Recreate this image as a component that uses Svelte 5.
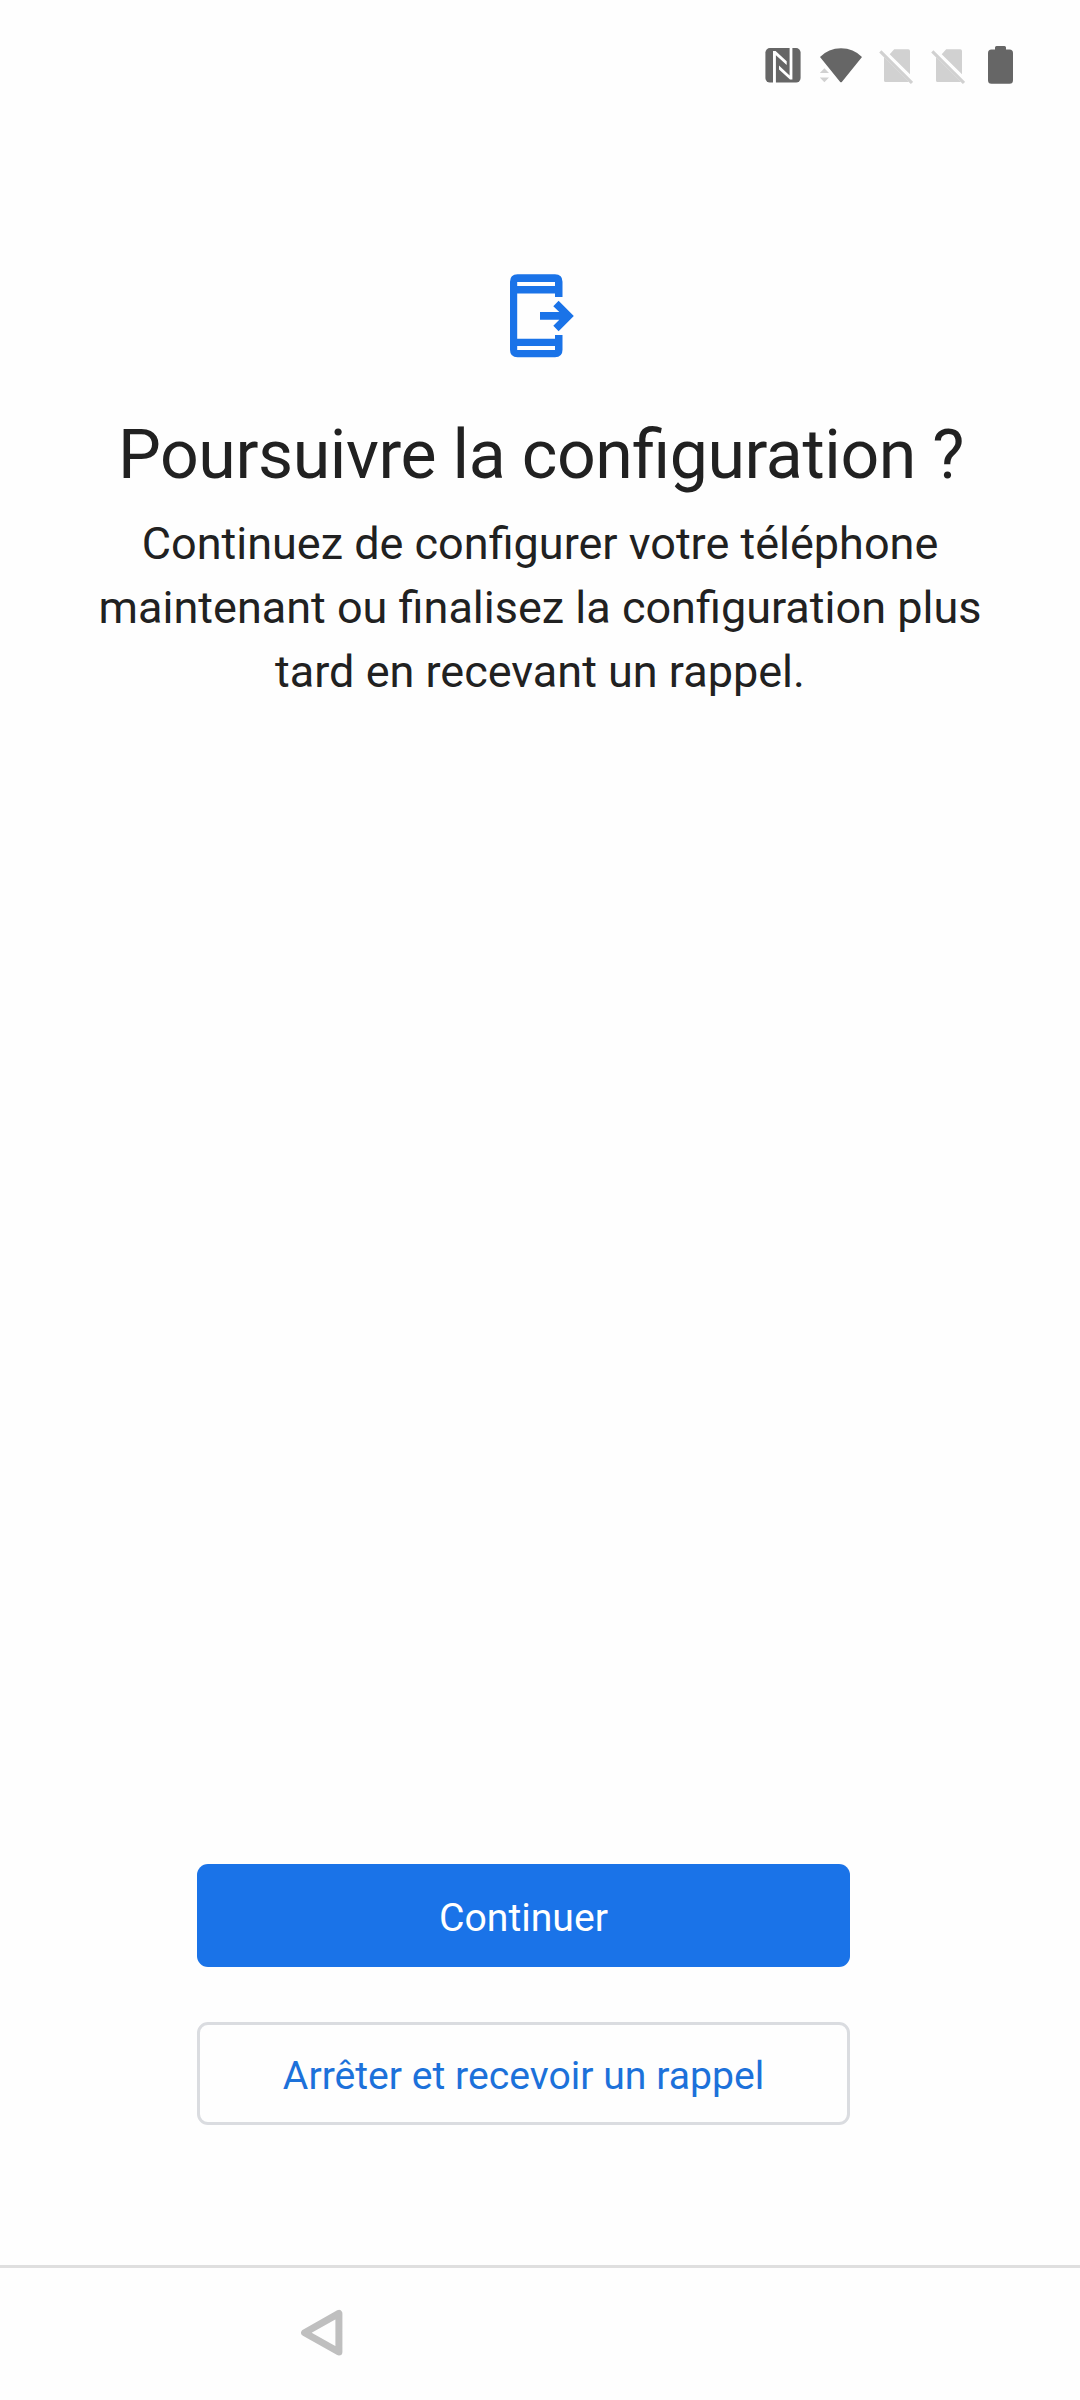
<script>
  const description = [
    'Continuez de configurer votre téléphone',
    'maintenant ou finalisez la configuration plus',
    'tard en recevant un rappel.'
  ];
</script>

<div class="screen">
  <header class="status">
    <svg class="nfc" width="36" height="36" viewBox="0 0 36 36">
      <rect x="0.4" y="0.1" width="35.2" height="34.5" rx="4.5" fill="#666" />
      <path d="M8 35V3H10.6L21.7 13.2V17L10.9 7.2V35ZM27.4 0V31.6H25L14 21.4V17.6L24.6 27.4V0Z" fill="#fff" />
    </svg>
    <svg class="wifi" width="44" height="36" viewBox="0 0 44 36">
      <path d="M1 9Q9.5 0.2 22 0.2T43 9L23 33.7Q22 35 21 33.7Z" fill="#666" />
      <path d="M5.4 20.2L10 25H0.8ZM0.8 29.5H10L5.4 34.3Z" fill="#d1d1d1" />
    </svg>
    {#each [0, 1] as slot (slot)}
      <svg class="sim" width="34" height="36" viewBox="0 0 34 36">
        <path d="M10.7 6.3L15.2 1.2H29.3Q31 1.2 31 2.9V26.2ZM5 9.2L30 34H6.5Q5 34 5 32.5Z" fill="#d1d1d1" />
        <path d="M1.3 3.3L33 34.9" stroke="#d1d1d1" stroke-width="3.2" />
      </svg>
    {/each}
    <svg class="battery" width="25" height="38" viewBox="0 0 25 38">
      <path d="M8.5 0H16.5Q18 0 18 1.5V3.6H21.5Q25 3.6 25 7.1V34.2Q25 37.7 21.5 37.7H3.5Q0 37.7 0 34.2V7.1Q0 3.6 3.5 3.6H7V1.5Q7 0 8.5 0Z" fill="#666" />
    </svg>
  </header>

  <main>
    <svg class="logo" width="64" height="84" viewBox="0 0 64 84">
      <path
        fill="#1a73e8"
        fill-rule="evenodd"
        d="M7.5 .3H45Q52.5 .3 52.5 7.8V23H45V19.4H7.2V64.7H45V61H52.5V75.8Q52.5 83.3 45 83.3H7.5Q0 83.3 0 75.8V7.8Q0 .3 7.5 .3ZM7.2 8V12H45V8ZM7.2 72V76H45V72Z"
      />
      <path d="M30 38H49.3L43.3 32.2L48.6 26.8L63.8 42L48.6 57.2L43.3 51.8L49.3 45.8H30Z" fill="#1a73e8" />
    </svg>
    <h1>Poursuivre la configuration ?</h1>
    <p>
      {#each description as line (line)}
        <span>{line}</span>
      {/each}
    </p>
  </main>

  <div class="actions">
    <button class="primary">Continuer</button>
    <button class="secondary">Arrêter et recevoir un rappel</button>
  </div>

  <nav>
    <svg class="back" width="44" height="48" viewBox="0 0 44 48">
      <path d="M38.9 4.4V43L4.6 23.7Z" fill="none" stroke="#bfbfbf" stroke-width="7" stroke-linejoin="round" />
    </svg>
  </nav>
</div>

<style>
  :global(body) {
    margin: 0;
    background: #fefefe;
  }
  .screen {
    box-sizing: border-box;
    width: 1080px;
    height: 2400px;
    display: flex;
    flex-direction: column;
    background: #fefefe;
    color: #212121;
    font-family: Roboto, sans-serif;
  }
  svg {
    display: block;
    flex: none;
  }
  .status {
    box-sizing: border-box;
    height: 130px;
    padding: 48px 67px 0 0;
    display: flex;
    justify-content: flex-end;
    align-items: flex-start;
  }
  .nfc {
    margin-right: 18px;
  }
  .wifi {
    margin-right: 16px;
  }
  .sim {
    margin-right: 18px;
  }
  .battery {
    margin: -2px 0 0 5px;
  }
  main {
    flex: 1;
    display: flex;
    flex-direction: column;
    align-items: center;
    padding-top: 144px;
  }
  .logo {
    margin-left: 4px;
  }
  h1 {
    margin: 57px 0 0 2px;
    font-size: 68px;
    line-height: 80px;
    font-weight: 400;
    letter-spacing: -0.41px;
    font-feature-settings: 'liga' 1;
    white-space: nowrap;
  }
  p {
    margin: 17px 0 0;
    font-size: 45px;
    line-height: 64px;
    text-align: center;
  }
  p span {
    display: block;
    white-space: nowrap;
  }
  .actions {
    width: 653px;
    margin: 0 0 140px 197px;
    display: flex;
    flex-direction: column;
    gap: 55px;
  }
  button {
    box-sizing: border-box;
    height: 103px;
    padding: 4px 0 0;
    border: 0;
    border-radius: 11px;
    font: 400 39.15px/46px Roboto, sans-serif;
    text-align: center;
  }
  .primary {
    background: #1a73e8;
    color: #fff;
  }
  .secondary {
    background: #fefefe;
    border: 3px solid #dadce0;
    color: #1c71da;
  }
  nav {
    box-sizing: border-box;
    height: 135px;
    border-top: 3px solid #dfdfdf;
    padding: 41px 0 0 300px;
  }
</style>
